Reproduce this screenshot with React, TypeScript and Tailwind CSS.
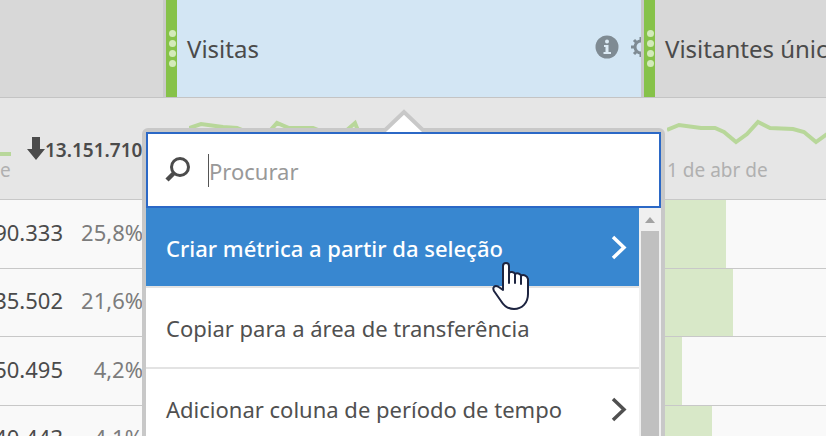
import React from "react";

type Row = { value: string; percent: string; bar: number };

const rows: Row[] = [
  { value: "90.333", percent: "25,8%", bar: 82 },
  { value: "35.502", percent: "21,6%", bar: 89 },
  { value: "50.495", percent: "4,2%", bar: 38 },
  { value: "40.443", percent: "4,1%", bar: 68 },
];

const menuItems = [
  { label: "Criar métrica a partir da seleção", active: true, submenu: true },
  { label: "Copiar para a área de transferência", active: false, submenu: false },
  { label: "Adicionar coluna de período de tempo", active: false, submenu: true },
];

function Handle() {
  return (
    <span className="flex w-[11px] shrink-0 flex-col items-center gap-[3px] bg-[#86c249] pt-[30px] pl-px">
      {[0, 1, 2, 3].map((dot) => (
        <span key={dot} className="size-[7px] rounded-full bg-[#d3eab9]" />
      ))}
    </span>
  );
}

function Sparkline({ points }: { points: string }) {
  return (
    <svg width="182" height="40" className="block" fill="none" stroke="#b8d79a" strokeWidth="4" aria-hidden="true">
      <polyline points={points} />
    </svg>
  );
}

function Chevron() {
  return (
    <svg width="16" height="26" viewBox="0 0 16 26" fill="none" stroke="currentColor" strokeWidth="3.500" aria-hidden="true">
      <path d="M2 2 L13 12.500 L2 23" />
    </svg>
  );
}

function InfoIcon() {
  return (
    <svg width="24" height="24" viewBox="0 0 24 24" aria-hidden="true">
      <circle cx="12" cy="12" r="11.5" fill="#7f8b93" />
      <path d="M9 10h4.500v7H16v2H8.500v-2h2v-5H9z" fill="#dcebf5" />
      <circle cx="12" cy="6.500" r="2" fill="#dcebf5" />
    </svg>
  );
}

function GearIcon() {
  return (
    <svg width="20" height="20" viewBox="0 0 20 20" fill="none" stroke="#7f8b93" aria-hidden="true">
      <circle cx="10" cy="10" r="6" strokeWidth="3" />
      <path
        d="M10 0v4M10 16v4M0 10h4M16 10h4M3 3l3 3M14 14l3 3M3 17l3-3M14 6l3-3"
        strokeWidth="3"
      />
    </svg>
  );
}

function HandCursor() {
  return (
    <svg
      className="pointer-events-none absolute top-[261px] left-[491px]"
      width="39"
      height="50"
      viewBox="0 0 39 50"
      fill="#fff"
      stroke="#1d2440"
      strokeWidth="2"
      strokeLinejoin="round"
      strokeLinecap="round"
      aria-hidden="true"
    >
      <path d="M12 29V5c0-4 6-4 6 0v7c1-1.500 5-1.500 6 1 2-1.500 5-.5 6 1.500 3-1 6 0 7 3.500v15c0 9-6 15-14 15-6 0-10-3-13-8L3 30c-2-4 1-6 4-4.500z" />
      <path d="M18 12v10M24 13v9M30 14.500V23" fill="none" />
    </svg>
  );
}

function ColumnMenu() {
  return (
    <div className="absolute top-[128px] left-[142px] w-[523px] rounded-t-md border-4 border-[#c8c8c8] bg-white">
      <svg className="absolute -top-[24px] left-[236px]" width="44" height="26" viewBox="0 0 44 26" aria-hidden="true">
        <path d="M3 24 L22 6 L41 24 V26 H3z" fill="#fff" />
        <path d="M1 24 L22 4 L43 24" fill="none" stroke="#c8c8c8" strokeWidth="4" />
      </svg>
      <label className="relative flex h-[76px] items-center border-2 border-[#2b68c6] bg-white pl-[17px]">
        <svg width="26" height="26" viewBox="0 0 26 26" fill="none" stroke="#4b4b4b" strokeWidth="3" aria-hidden="true">
          <circle cx="15" cy="10" r="8.500" />
          <path d="M9 16 L2 23" strokeWidth="4.500" />
        </svg>
        <span className="ml-[17px] h-[33px] w-px bg-[#555]" />
        <input
          type="text"
          aria-label="Procurar"
          placeholder="Procurar"
          className="min-w-0 flex-1 bg-transparent pt-0.5 text-[22px] outline-none placeholder:text-[#999]"
        />
      </label>
      <div className="flex">
        <ul className="min-w-0 flex-1">
          {menuItems.map((item) => (
            <li key={item.label} className="border-b-2 border-[#e3e3e3]">
              <button
                type="button"
                className={
                  item.active
                    ? "flex h-[78px] w-full items-center justify-between bg-[#3887d0] pt-0.5 pr-3 pl-5 text-left text-[22px] font-medium whitespace-nowrap text-white"
                    : "flex h-[79px] w-full items-center justify-between pt-0.5 pr-3 pl-5 text-left text-[22px] whitespace-nowrap text-[#505050]"
                }
              >
                {item.label}
                {item.submenu && <Chevron />}
              </button>
            </li>
          ))}
        </ul>
        <div className="flex w-[22px] flex-col items-center bg-[#f0f0f0] pt-[9px]">
          <svg width="10" height="6" aria-hidden="true">
            <path d="M0 6 L5 0 L10 6z" fill="#a3a3a3" />
          </svg>
          <span className="mt-2 w-[18px] flex-1 bg-[#c0c0c0]" />
        </div>
      </div>
    </div>
  );
}

export default function App() {
  return (
    <main className="relative h-screen overflow-hidden bg-[#f9f9f9] font-['Noto_Sans','Open_Sans',sans-serif] text-[#4b4b4b]">
      <table className="w-full table-fixed border-separate border-spacing-0">
        <colgroup>
          <col className="w-[166px]" />
          <col className="w-[478px]" />
          <col />
        </colgroup>
        <thead>
          <tr className="text-left text-2xl">
            <td className="border-r-[3px] border-b border-r-[#cacaca] border-b-[#c4c4c4] bg-[#d8d8d8] p-0" />
            <th className="border-r-[3px] border-b border-r-[#c8c8c8] border-b-[#c4c4c4] bg-[#d3e6f4] p-0 font-normal">
              <div className="flex h-[97px] overflow-hidden">
                <Handle />
                <span className="flex-1 self-center pl-[10px]">Visitas</span>
                <span className="-mr-[10px] flex items-center gap-3 pb-1">
                  <InfoIcon />
                  <GearIcon />
                </span>
              </div>
            </th>
            <th className="border-b border-[#c4c4c4] bg-[#d8d8d8] p-0 font-normal">
              <div className="flex h-[97px] overflow-hidden">
                <Handle />
                <span className="self-center pl-[10px] whitespace-nowrap">Visitantes únicos</span>
              </div>
            </th>
          </tr>
        </thead>
        <tbody>
          <tr className="bg-[#e6e6e6] align-top">
            <td className="border-b border-[#c8c8c8] p-0">
              <div className="flex h-[101px] items-start overflow-hidden">
                <div className="w-[11px] pt-[54px] text-[19px] leading-7 text-[#b0b0b0]">
                  <div className="h-1 bg-[#b8d79a]" />
                  e
                </div>
                <div className="ml-4 flex items-center pt-[38px] text-[19px] font-semibold">
                  <svg width="18" height="23" viewBox="0 0 18 23" fill="currentColor" className="mb-1 shrink-0" aria-hidden="true">
                    <path d="M5 0h8v12h5L9 23 0 12h5z" />
                  </svg>
                  13.151.710
                </div>
              </div>
            </td>
            <td className="border-b border-[#c8c8c8] p-0 pt-[18px] pl-[23px]">
              <Sparkline points="0,12 12,8 34,11 48,12 58,16 68,26 78,18 88,7 100,12 124,12 134,16 144,26 166,7 172,22" />
            </td>
            <td className="border-b border-[#c8c8c8] p-0 pt-[18px] pl-[23px] text-[19px] leading-7 text-[#b0b0b0]">
              <Sparkline points="0,14 12,9 34,12 48,12 57,16 69,26 80,18 91,6 103,12 126,13 137,16 149,26 160,18" />
              1 de abr de
            </td>
          </tr>
          {rows.map((row) => (
            <tr key={row.value} className="odd:h-[68px] even:h-[69px]">
              <td className="overflow-hidden border-b border-[#c8c8c8] p-0 pb-1 text-[22px]">
                <div className="flex justify-end pr-[23px]">
                  <span>{row.value}</span>
                  <span className="w-20 shrink-0 text-right text-[#7c7c7c]">{row.percent}</span>
                </div>
              </td>
              <td className="border-b border-[#c8c8c8] p-0" />
              <td className="h-[inherit] border-b border-[#c8c8c8] p-0">
                <div className="h-full bg-[#d8e8c8]" style={{ width: row.bar }} />
              </td>
            </tr>
          ))}
        </tbody>
      </table>
      <ColumnMenu />
      <HandCursor />
    </main>
  );
}
